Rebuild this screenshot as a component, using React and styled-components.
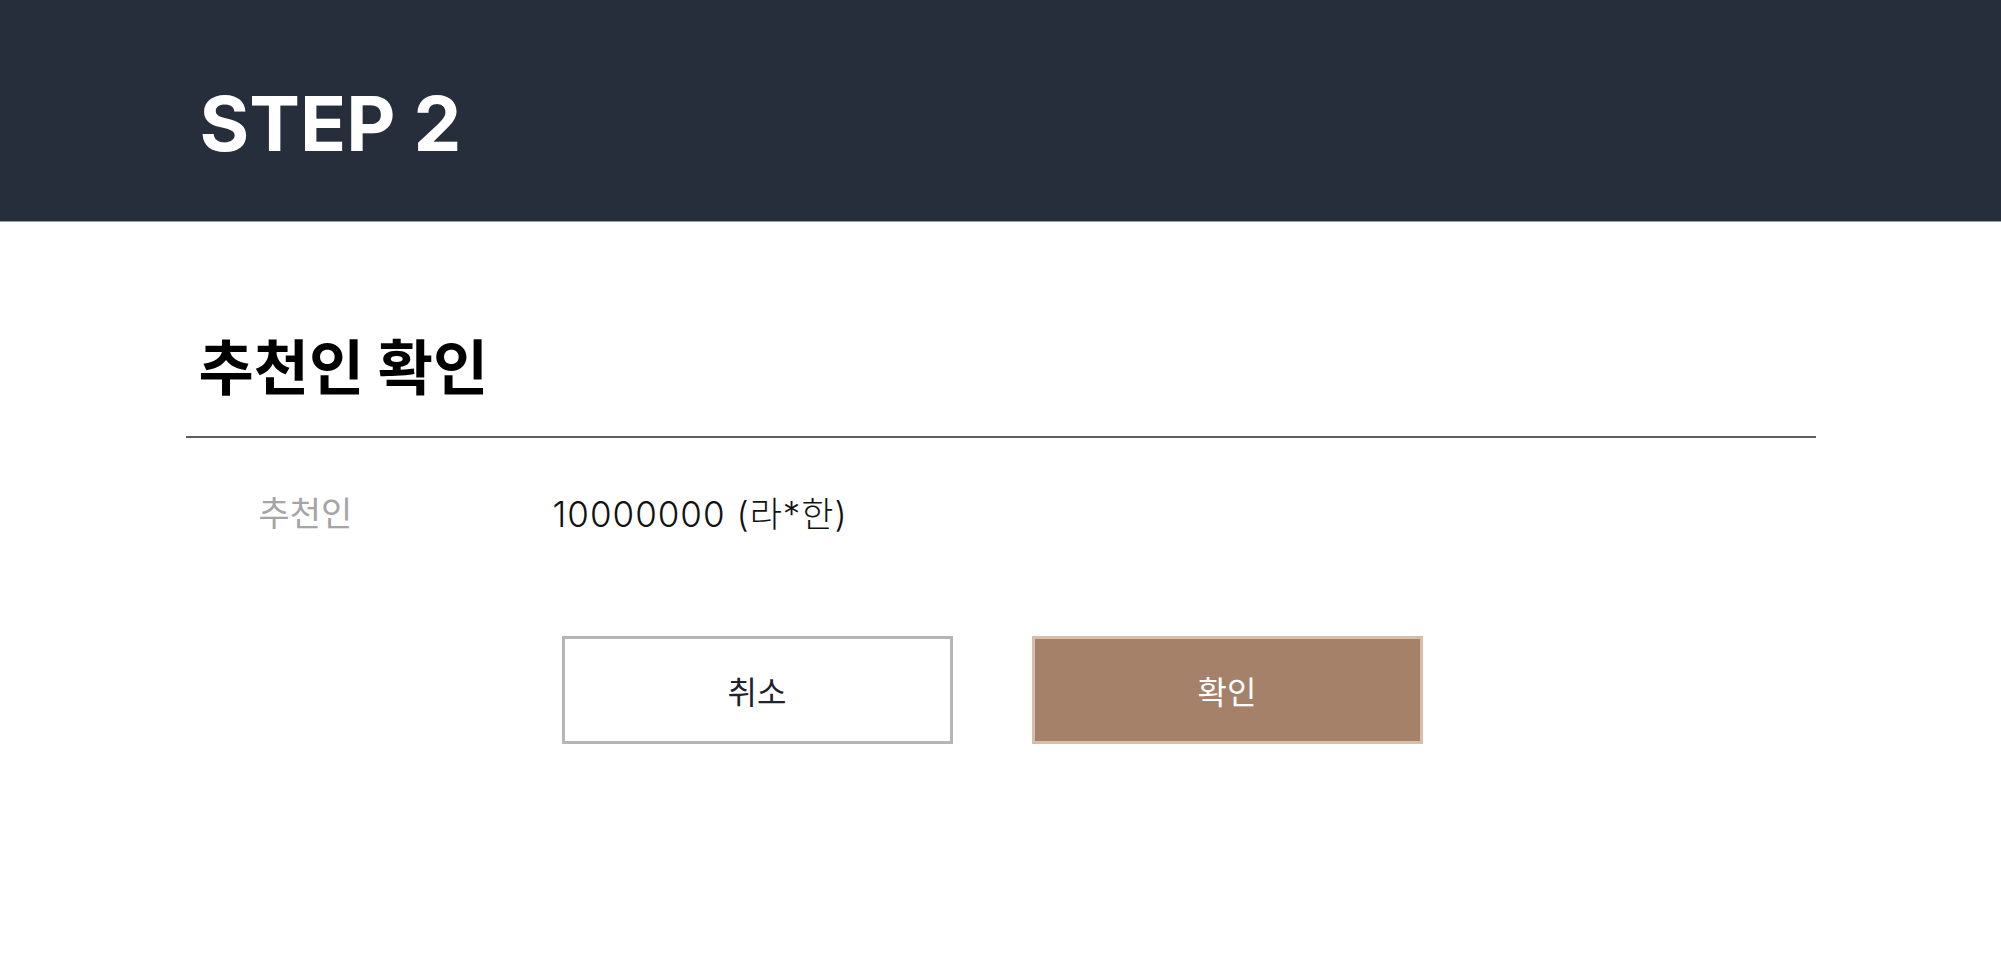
import React from "react";
import styled, { createGlobalStyle } from "styled-components";

const GlobalStyle = createGlobalStyle`
  html, body {
    margin: 0;
    padding: 0;
    background: #ffffff;
    font-family: "Noto Sans CJK KR", "Noto Sans", sans-serif;
  }
  * { box-sizing: border-box; }
`;

const Header = styled.header`
  height: 222px;
  background: #272e3b;
  border-bottom: 1px solid #9a9ea6;
`;

const Container = styled.div`
  width: 1630px;
  margin: 0 auto;
`;

const StepTitle = styled.h1`
  margin: 0;
  padding: 85px 0 0 14px;
  font-family: "Inter", "Liberation Sans", sans-serif;
  font-weight: 700;
  font-size: 76px;
  line-height: 76px;
  color: #ffffff;
  letter-spacing: 0;
`;

const Main = styled.main`
  padding-top: 113px;
`;

const SectionTitle = styled.h2`
  margin: 0;
  padding-left: 13px;
  font-family: "Noto Sans CJK KR", sans-serif;
  font-weight: 700;
  font-size: 60px;
  line-height: 58px;
  letter-spacing: 0;
  color: #000000;
`;

const Divider = styled.hr`
  margin: 43px 0 0;
  border: 0;
  height: 2px;
  background: #5e5e5e;
`;

const InfoRow = styled.div`
  display: grid;
  grid-template-columns: 367px 1fr;
  align-items: center;
  height: 40px;
  margin-top: 48px;
`;

const Label = styled.span`
  padding-left: 73px;
  font-family: "Noto Sans CJK KR", sans-serif;
  font-size: 34px;
  color: #a5a5a5;
  letter-spacing: 0;
`;

const Value = styled.span`
  font-family: "Inter", "Noto Sans CJK KR", sans-serif;
  font-weight: 300;
  font-size: 35px;
  letter-spacing: 1px;
  color: #111111;
`;

const ButtonRow = styled.div`
  display: flex;
  gap: 79px;
  margin-top: 110px;
  padding-left: 376px;
`;

const Button = styled.button`
  width: 391px;
  height: 108px;
  display: flex;
  align-items: center;
  justify-content: center;
  font-family: "Noto Sans CJK KR", sans-serif;
  font-size: 32px;
  font-weight: 400;
  cursor: pointer;
  border: 3px solid ${(p) => (p.$primary ? "#d7bea9" : "#b4b4b9")};
  background: ${(p) => (p.$primary ? "#a6816a" : "#ffffff")};
  color: ${(p) => (p.$primary ? "#ffffff" : "#1f2330")};
`;

export default function App() {
  return (
    <>
      <GlobalStyle />
      <Header>
        <Container>
          <StepTitle>STEP 2</StepTitle>
        </Container>
      </Header>
      <Main>
        <Container>
          <SectionTitle>추천인 확인</SectionTitle>
          <Divider />
          <InfoRow>
            <Label>추천인</Label>
            <Value>10000000 (라*한)</Value>
          </InfoRow>
          <ButtonRow>
            <Button type="button">취소</Button>
            <Button type="button" $primary>확인</Button>
          </ButtonRow>
        </Container>
      </Main>
    </>
  );
}
